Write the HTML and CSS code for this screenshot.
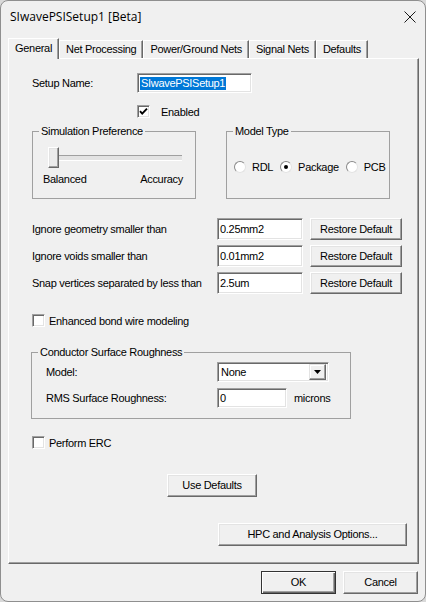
FILE: index.html
```html
<!DOCTYPE html>
<html>
<head>
<meta charset="utf-8">
<title>SIwavePSISetup1 [Beta]</title>
<link rel="stylesheet" href="styles.css">
</head>
<body>
<div class="window">
  <div class="titlebar">
    <span class="title">SIwavePSISetup1 [Beta]</span>
    <svg class="close" width="12" height="12" viewBox="0 0 12 12"><path d="M0.5 0.5 L11.5 11.5 M11.5 0.5 L0.5 11.5" stroke="#1a1a1a" stroke-width="1" fill="none"/></svg>
  </div>
  <div class="tabs">
    <div class="tab active">General</div>
    <div class="tab">Net Processing</div>
    <div class="tab">Power/Ground Nets</div>
    <div class="tab">Signal Nets</div>
    <div class="tab">Defaults</div>
  </div>
  <div class="panel">
    <div class="row-setup">
      <span class="setup-label">Setup Name:</span>
      <div class="edit setup-edit"><span class="sel">SIwavePSISetup1</span></div>
    </div>
    <div class="row-enabled">
      <span class="check"><svg width="9" height="9" viewBox="0 0 9 9"><polyline points="1,4.2 3.2,6.6 8,1.6" fill="none" stroke="#000" stroke-width="1.9"/></svg></span>
      <span>Enabled</span>
    </div>
    <div class="groups">
      <fieldset class="group sim">
        <legend>Simulation Preference</legend>
        <div class="slider"><div class="thumb"></div></div>
        <div class="slider-labels"><span>Balanced</span><span>Accuracy</span></div>
      </fieldset>
      <fieldset class="group model">
        <legend>Model Type</legend>
        <div class="radios">
          <span class="radio-item"><span class="radio"></span>RDL</span>
          <span class="radio-item"><span class="radio on"><span class="dot"></span></span>Package</span>
          <span class="radio-item"><span class="radio"></span>PCB</span>
        </div>
      </fieldset>
    </div>
    <div class="params">
      <div class="param">
        <span class="param-label">Ignore geometry smaller than</span>
        <div class="edit param-edit">0.25mm2</div>
        <div class="btn restore">Restore Default</div>
      </div>
      <div class="param">
        <span class="param-label">Ignore voids smaller than</span>
        <div class="edit param-edit">0.01mm2</div>
        <div class="btn restore">Restore Default</div>
      </div>
      <div class="param">
        <span class="param-label">Snap vertices separated by less than</span>
        <div class="edit param-edit">2.5um</div>
        <div class="btn restore">Restore Default</div>
      </div>
    </div>
    <div class="checkrow bond">
      <span class="check"></span>
      <span>Enhanced bond wire modeling</span>
    </div>
    <fieldset class="group rough">
      <legend>Conductor Surface Roughness</legend>
      <div class="crow model-row">
        <span class="crow-label">Model:</span>
        <div class="edit select">
          <span class="select-text">None</span>
          <span class="drop"><svg width="7" height="4" viewBox="0 0 7 4"><polygon points="0,0 7,0 3.5,4" fill="#000"/></svg></span>
        </div>
      </div>
      <div class="crow rms-row">
        <span class="crow-label">RMS Surface Roughness:</span>
        <div class="edit rms-edit">0</div>
        <span class="unit">microns</span>
      </div>
    </fieldset>
    <div class="checkrow erc">
      <span class="check"></span>
      <span>Perform ERC</span>
    </div>
    <div class="btn use-defaults">Use Defaults</div>
    <div class="btn hpc">HPC and Analysis Options...</div>
  </div>
  <div class="footer">
    <div class="btn foot ok">OK</div>
    <div class="btn foot">Cancel</div>
  </div>
</div>
</body>
</html>
```
FILE: styles.css
```css
* { box-sizing: border-box; }
html, body { margin: 0; padding: 0; }
body {
  width: 426px;
  height: 602px;
  background: #d9d9d9;
  font-family: "Liberation Sans", Arial, sans-serif;
  font-size: 11px;
  letter-spacing: -0.3px;
  color: #000;
}
.window {
  width: 426px;
  height: 602px;
  border: 1px solid #8f8f8f;
  border-radius: 8px;
  background: #f0f0f0;
  overflow: hidden;
}
.titlebar {
  height: 31px;
  display: flex;
  align-items: center;
  justify-content: space-between;
  padding: 0 9px;
}
.title {
  font-family: "Open Sans", "Noto Sans", sans-serif;
  font-size: 12px;
  letter-spacing: 0;
  color: #000;
}
.tabs {
  margin-top: 6px;
  height: 20px;
  padding-left: 7px;
  display: flex;
  align-items: flex-end;
}
.tab {
  height: 18px;
  padding: 0 6px;
  display: flex;
  align-items: center;
  background: #f0f0f0;
  border-top: 1px solid #fff;
  border-left: 1px solid #fff;
  border-right: 1px solid #696969;
  box-shadow: inset -1px 0 0 #a0a0a0;
  line-height: 13px;
}
.tab.active {
  height: 21px;
  margin-bottom: -1px;
  padding: 0 6px 2px 6px;
  position: relative;
  z-index: 1;
}
.panel {
  margin-left: 7px;
  width: 411px;
  height: 506px;
  border-top: 1px solid #fff;
  border-left: 1px solid #fff;
  border-right: 1px solid #696969;
  border-bottom: 1px solid #696969;
  box-shadow: inset -1px -1px 0 #a0a0a0;
  padding-left: 23px;
  display: flex;
  flex-direction: column;
  align-items: flex-start;
}
.edit {
  background: #fff;
  border: 1px solid;
  border-color: #a0a0a0 #fff #fff #a0a0a0;
  box-shadow: inset 1px 1px 0 #696969, inset -1px -1px 0 #e3e3e3;
  padding: 0 2px;
  display: flex;
  align-items: center;
  line-height: 13px;
}
.row-setup {
  margin-top: 14px;
  height: 20px;
  display: flex;
  align-items: center;
}
.setup-label { width: 105px; }
.setup-edit { width: 115px; height: 20px; }
.sel { background: #0078d7; color: #fff; padding: 0 1px; }
.check {
  width: 13px;
  height: 13px;
  flex: none;
  background: #fff;
  border: 1px solid;
  border-color: #a0a0a0 #fff #fff #a0a0a0;
  box-shadow: inset 1px 1px 0 #696969, inset -1px -1px 0 #e3e3e3;
  display: flex;
  align-items: center;
  justify-content: center;
}
.row-enabled {
  margin-top: 12px;
  height: 13px;
  padding-left: 105px;
  display: flex;
  align-items: center;
  gap: 11px;
}
.groups {
  margin-top: 7px;
  display: flex;
  gap: 30px;
}
.group {
  margin: 0;
  padding: 0;
  min-width: 0;
  border: 1px solid #a0a0a0;
}
.group legend {
  margin-left: 6px;
  padding: 0 2px;
  height: 12px;
  line-height: 12px;
}
.sim, .model { width: 164px; height: 74px; }
.slider {
  position: relative;
  margin: 10px 0 0 15px;
  width: 134px;
  height: 21px;
}
.slider::before {
  content: "";
  position: absolute;
  left: 0;
  right: 0;
  top: 8px;
  height: 4px;
  border-top: 1px solid #a0a0a0;
  border-bottom: 1px solid #fff;
  background: #e3e3e3;
}
.thumb {
  position: absolute;
  left: 0;
  top: 0;
  width: 11px;
  height: 21px;
  background: #ececec;
  border: 1px solid;
  border-color: #fff #696969 #696969 #fff;
  box-shadow: inset -1px -1px 0 #a0a0a0, inset 1px 1px 0 #e3e3e3;
}
.slider-labels {
  margin: 5px 12px 0 10px;
  display: flex;
  justify-content: space-between;
  line-height: 13px;
}
.radios {
  margin: 23px 0 0 7px;
  height: 13px;
  display: flex;
  align-items: center;
  gap: 7px;
}
.radio-item {
  display: flex;
  align-items: center;
  gap: 6px;
}
.radio {
  width: 12px;
  height: 12px;
  border-radius: 50%;
  background: #fff;
  border: 1px solid;
  border-color: #8a8a8a #e3e3e3 #e3e3e3 #8a8a8a;
  display: flex;
  align-items: center;
  justify-content: center;
}
.dot { width: 4px; height: 4px; border-radius: 50%; background: #000; }
.params {
  margin-top: 19px;
  display: flex;
  flex-direction: column;
  gap: 5px;
}
.param {
  height: 22px;
  display: flex;
  align-items: center;
}
.param-label { width: 185px; }
.param-edit { width: 86px; height: 22px; }
.btn {
  display: flex;
  align-items: center;
  justify-content: center;
  background: #f0f0f0;
  border: 1px solid;
  border-color: #fff #696969 #696969 #fff;
  box-shadow: inset -1px -1px 0 #a0a0a0, inset 1px 1px 0 #e3e3e3;
  line-height: 13px;
}
.restore { width: 92px; height: 22px; margin-left: 7px; }
.checkrow {
  height: 13px;
  display: flex;
  align-items: center;
  gap: 4px;
}
.bond { margin-top: 20px; }
.rough {
  margin: 19px 0 0 -1px;
  width: 320px;
  height: 73px;
}
.crow {
  padding-left: 14px;
  height: 20px;
  display: flex;
  align-items: center;
}
.model-row { margin-top: 4px; }
.rms-row { margin-top: 6px; }
.crow-label { width: 171px; }
.select {
  width: 112px;
  height: 20px;
  padding: 0 2px 0 3px;
  justify-content: space-between;
}
.drop {
  width: 17px;
  height: 16px;
  background: #f0f0f0;
  border: 1px solid;
  border-color: #e3e3e3 #696969 #696969 #e3e3e3;
  box-shadow: inset -1px -1px 0 #a0a0a0, inset 1px 1px 0 #fff;
  display: flex;
  align-items: center;
  justify-content: center;
}
.rms-edit { width: 70px; height: 20px; }
.unit { margin-left: 7px; }
.erc { margin-top: 17px; }
.use-defaults { margin: 25px 0 0 135px; width: 90px; height: 23px; }
.hpc { margin: 26px 0 0 186px; width: 189px; height: 23px; }
.footer {
  margin-top: 7px;
  padding-right: 7px;
  display: flex;
  justify-content: flex-end;
  gap: 7px;
}
.foot { width: 75px; height: 23px; }
.ok {
  border: 1px solid #333;
  box-shadow: inset 1px 1px 0 #fff, inset -1px -1px 0 #696969, inset -2px -2px 0 #a0a0a0;
}
```
